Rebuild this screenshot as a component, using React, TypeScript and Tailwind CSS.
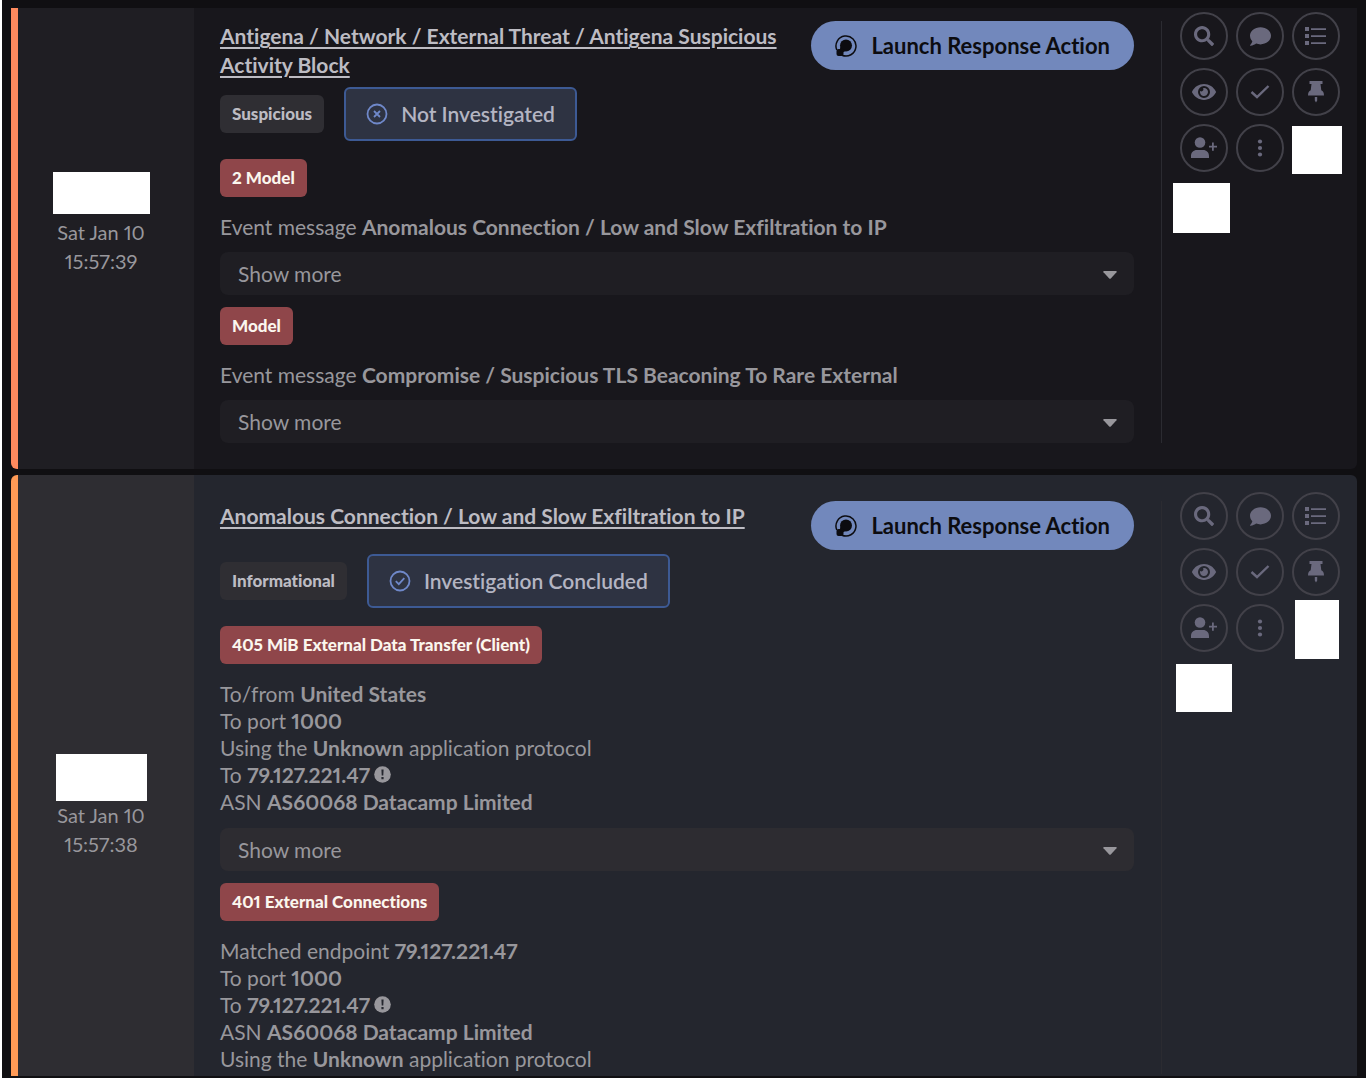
import React from 'react'
import { FaSearch, FaComment, FaEye } from 'react-icons/fa'

const actions = [
  { label: 'Search', icon: <FaSearch size={20} /> },
  { label: 'Comment', icon: <FaComment size={21} /> },
  { label: 'Event log', icon: <ListIcon /> },
  { label: 'Watch', icon: <FaEye size={24} /> },
  { label: 'Acknowledge', icon: <CheckIcon /> },
  { label: 'Pin', icon: <PinIcon /> },
  { label: 'Assign user', icon: <UserPlusIcon /> },
  { label: 'More', icon: <DotsIcon /> },
]

function ListIcon() {
  return (
    <svg width="22" height="18" viewBox="0 0 22 18" fill="currentColor">
      <path d="M0 0h4v4H0zM0 7h4v4H0zM0 14h4v4H0zM6 1.2h15v1.7H6zM6 8.2h15v1.7H6zM6 15.2h15v1.7H6z" />
    </svg>
  )
}

function CheckIcon() {
  return (
    <svg width="20" height="16" viewBox="0 0 20 16" fill="none" stroke="currentColor" strokeWidth="2.4">
      <path d="M1.500 8l5.500 5L18.500 2" />
    </svg>
  )
}

function PinIcon() {
  return (
    <svg width="18" height="22" viewBox="0 0 18 22" fill="currentColor">
      <path d="M2.500 0h13v3h-2l.8 6.200c1.700.9 2.700 2.300 2.700 5.300H1c0-3 1-4.400 2.700-5.300L4.500 3h-2zM7.800 16h2.400v3.500L9 21.500l-1.200-2z" />
    </svg>
  )
}

function UserPlusIcon() {
  return (
    <svg width="26" height="22" viewBox="0 0 26 22" fill="currentColor">
      <circle cx="9" cy="5.500" r="5.300" />
      <path d="M0 21v-2c0-3.600 2.400-6 6-6h6c3.600 0 6 2.400 6 6v2zM21 5.500h1.800v3.200H26v1.800h-3.200v3.300H21v-3.300h-3V8.700h3z" />
    </svg>
  )
}

function DotsIcon() {
  return (
    <svg width="6" height="18" viewBox="0 0 6 18" fill="currentColor">
      <circle cx="3" cy="2.500" r="2.100" />
      <circle cx="3" cy="9" r="2.100" />
      <circle cx="3" cy="15.500" r="2.100" />
    </svg>
  )
}

function ResponseIcon() {
  return (
    <svg width="22" height="22" viewBox="0 0 22 22" fill="none">
      <path d="M1.800 15A10 10 0 1 1 7 20.200" stroke="currentColor" strokeWidth="1.500" />
      <circle cx="11" cy="10.500" r="6" fill="currentColor" />
      <rect x="1.500" y="14" width="7" height="7" rx="2" fill="currentColor" />
      <path d="M5.500 12l5 4-3 1.500-3-2z" fill="currentColor" />
    </svg>
  )
}

function StatusIcon({ concluded }: { concluded: boolean }) {
  return (
    <svg width="22" height="22" viewBox="0 0 22 22" fill="none" stroke="#6f88c9" strokeWidth="1.800">
      <circle cx="11" cy="11" r="9.500" />
      {concluded ? <path d="M6.800 11.200l3 3 5.500-6" /> : <path d="M8 8l6 6M14 8l-6 6" />}
    </svg>
  )
}

function Tag({ children }) {
  return (
    <span className="inline-flex h-[38px] items-center rounded-md bg-[#8f464a] px-3 text-[17px] font-black text-[#fbf6ee]">
      {children}
    </span>
  )
}

function ShowMore() {
  return (
    <button className="mt-3 flex h-[43px] w-full items-center justify-between rounded-lg bg-(--panel) pr-[17px] pl-[18px] text-[21px] text-[#98979c]">
      Show more
      <svg className="mt-0.5" width="14" height="8" viewBox="0 0 14 8" fill="#98979c">
        <path d="M1 0h12q1.200.2.500 1.200L8 7.200q-1 1-2 0L.5 1.200Q-.2.2 1 0z" />
      </svg>
    </button>
  )
}

function Endpoint() {
  return (
    <p className="flex items-center">
      <span className="whitespace-pre">To </span>
      <b>79.127.221.47</b>
      <svg className="ml-1" width="17" height="17" viewBox="0 0 17 17">
        <circle cx="8.500" cy="8.500" r="8.300" fill="#98979c" />
        <path d="M7.400 3.500h2.200l-.3 6H7.700zM7.400 11h2.200v2.200H7.400z" fill="#24262e" />
      </svg>
    </p>
  )
}

function EventCard({ title, level, status, concluded = false, time, className, dateClass, redacted, children }) {
  return (
    <article className={`flex overflow-hidden ${className}`}>
      <div className={`flex w-[176px] shrink-0 flex-col items-center justify-center pr-2.5 text-xl leading-[29px] text-[#98979c] ${dateClass}`}>
        <div className={`bg-white ${redacted[0]}`} />
        <time className="text-center">
          Sat Jan 10
          <br />
          {time}
        </time>
      </div>

      <div className="flex flex-1 pt-(--top) pr-[17px] pb-(--bottom) pl-[26px]">
        <div className="min-w-0 flex-1">
          <div className="mb-1 flex items-start justify-between gap-6">
            <h2 className="pb-1 text-[21px] leading-[29px] font-bold text-[#bdbcc3]">
              <a href="#" className="underline decoration-2 underline-offset-3">{title}</a>
            </h2>
            <button className="flex h-[49px] shrink-0 items-center gap-3.5 rounded-full bg-[#7288bc] px-6 text-[22px] font-bold text-[#0c0c10]">
              <ResponseIcon />
              Launch Response Action
            </button>
          </div>

          <div className="mb-[18px] flex items-center gap-5">
            <span className="flex h-[38px] items-center rounded-md bg-[#2f2e33] px-3 text-[17px] font-black text-[#bdbcc3]">{level}</span>
            <button className="flex h-[54px] items-center gap-[13px] rounded-md border-2 border-[#3d5a94] bg-[#2e3342] px-5 text-[21px] font-semibold text-[#b4b5c2]">
              <StatusIcon concluded={concluded} />
              {status}
            </button>
          </div>

          {children}
        </div>

        <div className="ml-[27px] w-px bg-[#2b2b31]" />

        <div className="-mt-[9px] ml-[18px] grid auto-rows-[48px] grid-cols-[repeat(3,48px)] content-start gap-2">
          {actions.map((action) => (
            <button
              key={action.label}
              aria-label={action.label}
              className="flex items-center justify-center rounded-full border-2 border-[#424149] text-[#6a697d]"
            >
              {action.icon}
            </button>
          ))}
          <div className={`bg-white ${redacted[1]}`} />
          <div className={`bg-white ${redacted[2]}`} />
        </div>
      </div>
    </article>
  )
}

export default function App() {
  return (
    <div className="flex min-h-screen flex-col gap-1.5 border-l-2 border-white bg-[#100f12] px-[9px] pt-2 pb-0.5 font-[Lato,sans-serif] proportional-nums [font-feature-settings:'liga'_0]">
      <EventCard
        title="Antigena / Network / External Threat / Antigena Suspicious Activity Block"
        level="Suspicious"
        status="Not Investigated"
        time="15:57:39"
        className="rounded-b-md border-l-7 border-[#ff8a5e] bg-[#18171c] [--bottom:26px] [--panel:#1f1e23] [--top:13px]"
        dateClass="bg-[#1f1e23] pb-[30px]"
        redacted={['mb-1 h-[42px] w-[97px]', 'mt-0.5 h-12 w-[50px]', 'mt-[3px] -ml-[7px] h-[50px] w-[57px]']}
      >
        <Tag>2 Model</Tag>
        <p className="mt-4 text-[21px] leading-[27px] text-[#98979c]">
          Event message <b>Anomalous Connection / Low and Slow Exfiltration to IP</b>
        </p>
        <ShowMore />
        <div className="mt-3">
          <Tag>Model</Tag>
        </div>
        <p className="mt-4 text-[21px] leading-[27px] text-[#98979c]">
          Event message <b>Compromise / Suspicious TLS Beaconing To Rare External</b>
        </p>
        <ShowMore />
      </EventCard>

      <EventCard
        title="Anomalous Connection / Low and Slow Exfiltration to IP"
        level="Informational"
        status="Investigation Concluded"
        concluded
        time="15:57:38"
        className="flex-1 rounded-t-md border-l-7 border-[#ff9a56] bg-[#24262e] [--bottom:2px] [--panel:#2d2c31] [--top:26px]"
        dateClass="bg-[#2e2d32] pt-[62px]"
        redacted={['h-[47px] w-[91px]', '-mt-1 ml-[3px] h-[59px] w-11', 'mt-1 -ml-1 h-12 w-14']}
      >
        <Tag>405 MiB External Data Transfer (Client)</Tag>
        <div className="mt-4 pb-px text-[21px] leading-[27px] text-[#98979c]">
          <p>To/from <b>United States</b></p>
          <p>To port <b>1000</b></p>
          <p>Using the <b>Unknown</b> application protocol</p>
          <Endpoint />
          <p>ASN <b>AS60068 Datacamp Limited</b></p>
        </div>
        <ShowMore />
        <div className="mt-3">
          <Tag>401 External Connections</Tag>
        </div>
        <div className="mt-4 text-[21px] leading-[27px] text-[#98979c]">
          <p>Matched endpoint <b>79.127.221.47</b></p>
          <p>To port <b>1000</b></p>
          <Endpoint />
          <p>ASN <b>AS60068 Datacamp Limited</b></p>
          <p>Using the <b>Unknown</b> application protocol</p>
        </div>
      </EventCard>
    </div>
  )
}
